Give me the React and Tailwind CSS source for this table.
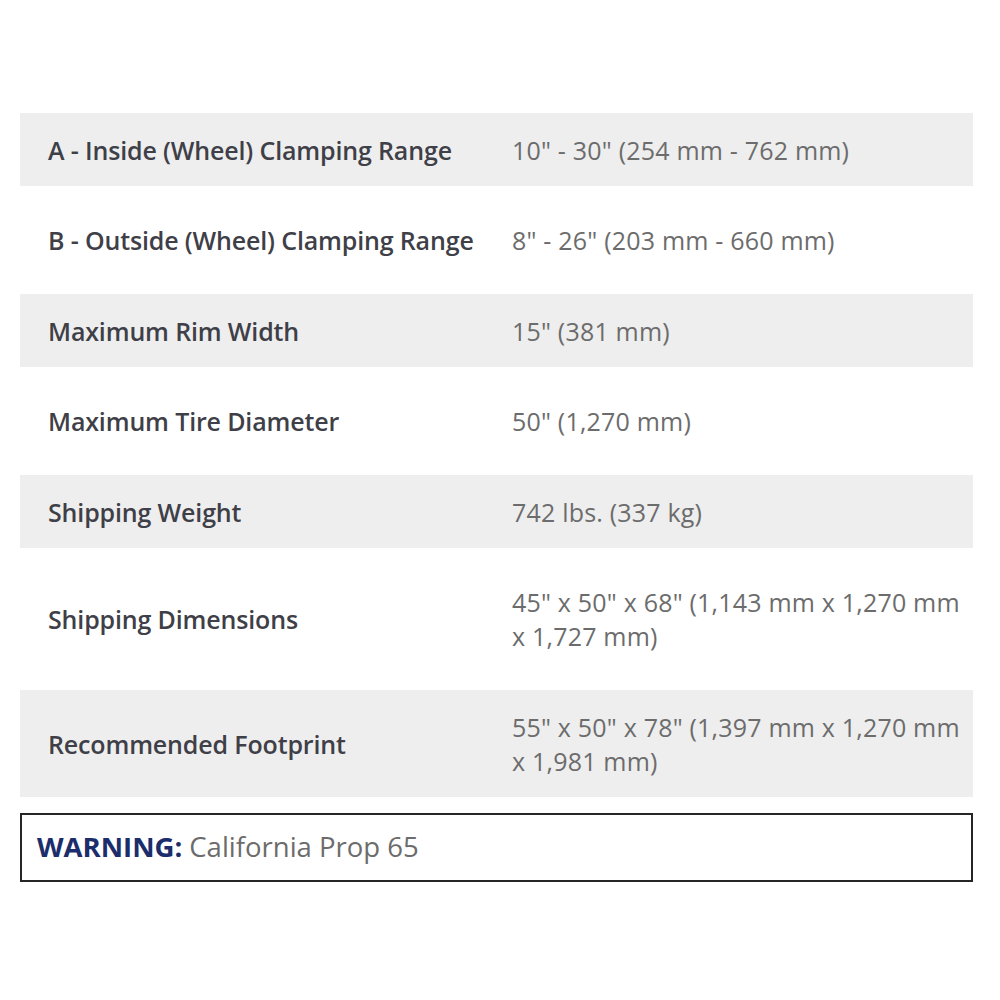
import React from "react";

const rows = [
  ["A - Inside (Wheel) Clamping Range", ['10" - 30" (254 mm - 762 mm)'], true],
  ["B - Outside (Wheel) Clamping Range", ['8" - 26" (203 mm - 660 mm)'], false],
  ["Maximum Rim Width", ['15" (381 mm)'], true],
  ["Maximum Tire Diameter", ['50" (1,270 mm)'], false],
  ["Shipping Weight", ["742 lbs. (337 kg)"], true],
  ["Shipping Dimensions", ['45" x 50" x 68" (1,143 mm x 1,270 mm', "x 1,727 mm)"], false],
  ["Recommended Footprint", ['55" x 50" x 78" (1,397 mm x 1,270 mm', "x 1,981 mm)"], true],
];

export default function App() {
  return (
    <div className="w-[1000px] h-[1000px] bg-white pt-[113px] px-[20px]" style={{ fontFamily: '"Open Sans", sans-serif' }}>
      <div className="w-[953px]">
        {rows.map(([label, value, gray], i) => (
          <div
            key={i}
            className={
              "flex items-center leading-[34px] " +
              (gray ? "bg-[#eeeeee] pt-[20px] pb-[19px]" : "bg-white py-[37px]")
            }
          >
            <div className="w-[472px] shrink-0 pl-[28px] text-[25px] font-semibold text-[#3f3f48] tracking-[-0.15px] whitespace-nowrap">
              {label}
            </div>
            <div className="pl-[20px] text-[25px] text-[#6c6c6c] tracking-[0.2px] whitespace-nowrap">
              {value.map((v, j) => (
                <div key={j}>{v}</div>
              ))}
            </div>
          </div>
        ))}
        <div className="mt-[16px] border-2 border-[#262626] h-[69px] flex items-center pl-[15px] pb-[2px] text-[27.5px]">
          <span className="font-bold text-[#1c2d6b]">WARNING:</span>
          <span className="text-[#6c6c6c] ml-[7px]">California Prop 65</span>
        </div>
      </div>
    </div>
  );
}
